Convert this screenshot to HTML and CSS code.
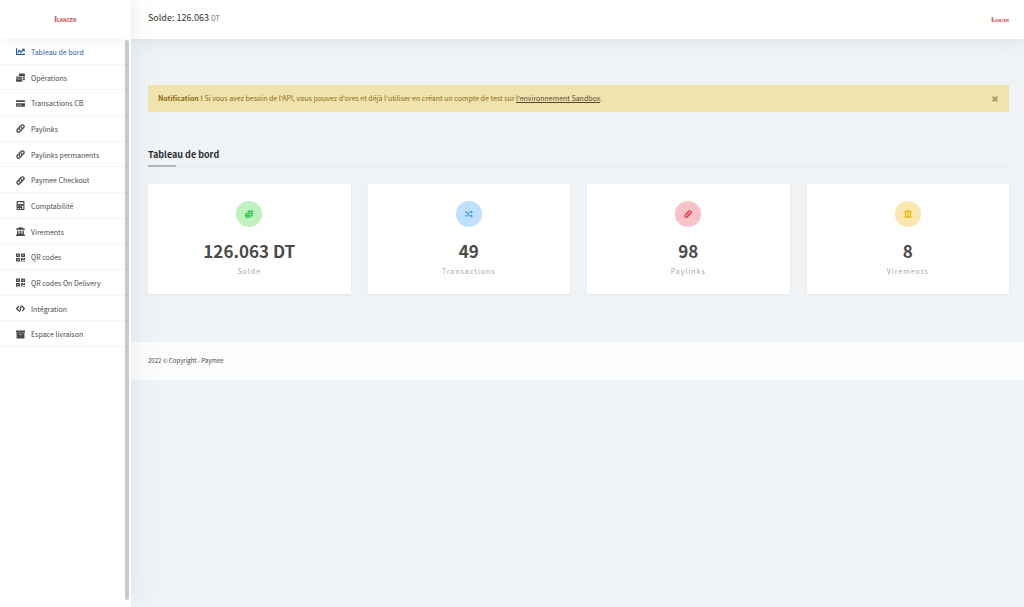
FILE: index.html
```html
<!DOCTYPE html>
<html lang="fr">
<head>
<meta charset="utf-8">
<meta name="viewport" content="width=device-width, initial-scale=1">
<title>Tableau de bord - Paymee</title>
<link rel="stylesheet" href="styles.css">
</head>
<body>
<svg class="sprite" aria-hidden="true">
  <symbol id="chart" viewBox="0 0 16 16"><path d="M0 2h2v10h14v2H0z"/><path d="M3 10V7.500l3-3 3 3 2.500-2.500L10 3.500V3h5.500v5.500H15L13 6.500 9 10.800l-3-3-2 2.200z"/></symbol>
  <symbol id="coins" viewBox="0 0 16 16"><path d="M6 .8h9l1 1v2.400l-1 1H6l-1-1V1.800zM12 6.200h4v2l-1 1h-3zM12 10.200h4v1.600l-1 1h-3z"/><path d="M1 6h9l1 1v1.500H0V7zM0 9.300h11v2.500H0zM0 12.600h11v1.900l-1 1H1l-1-1z"/></symbol>
  <symbol id="card" viewBox="0 0 18 16"><path d="M1.500 1.500h15c1 0 1.500.6 1.500 1.500v2H0V3c0-.9.5-1.500 1.500-1.500zM0 7.500h18v5.500c0 1-.5 1.500-1.500 1.500h-15C.5 14.500 0 14 0 13zm2 3.200v1.500h3v-1.500zm4.500 0v1.500H11v-1.500z" fill-rule="evenodd"/></symbol>
  <symbol id="link" viewBox="0 0 16 16"><g fill="none" stroke="currentColor" stroke-width="2.400" stroke-linecap="round"><path d="M6.500 9.800C5 8.300 5.100 6.700 6.400 5.400l2.800-2.900c1.300-1.300 3-1.300 4.200-.1s1.200 3 0 4.200l-1.600 1.600"/><path d="M9.500 6.200c1.500 1.500 1.400 3.100.1 4.400l-2.800 2.900c-1.300 1.300-3 1.300-4.200.1s-1.200-3 0-4.200l1.600-1.600"/></g></symbol>
  <symbol id="calc" viewBox="0 0 16 16"><path fill-rule="evenodd" d="M2.500 0h11C14.500 0 15 .5 15 1.500v13c0 1-.5 1.500-1.500 1.500h-11C1.500 16 1 15.500 1 14.500v-13C1 .5 1.500 0 2.500 0zM3 2v3.500h10V2zm0 6v1.500h2V8zm4 0v1.500h2V8zm4 0v6h2V8zM3 12.500V14h2v-1.500zm4 0V14h2v-1.500z"/></symbol>
  <symbol id="bank" viewBox="0 0 16 16"><path d="M8 0l8 3.200V5H0V3.200zM2 6h2.500v6h2V6h3v6h2V6H14v6l1 1v1H1v-1l1-1zM0 14.300h16V16H0z"/></symbol>
  <symbol id="qr" viewBox="0 0 16 16"><path fill-rule="evenodd" d="M0 1h7v6H0zm2.500 2v2h2V3zM9 1h7v6H9zm2.500 2v2h2V3zM0 9h7v6H0zm2.500 2v2h2v-2zM9 9h4v2h1V9h2v4h-4v-1h-1v3H9zM12 14h1.500v1.500H12zM14.500 14H16v1.500h-1.500z"/></symbol>
  <symbol id="code" viewBox="0 0 20 16"><path d="M5.500 3.500L1.500 8l4 4.500M14.500 3.500l4 4.500-4 4.500M11.700 1.500l-3.400 13" fill="none" stroke="currentColor" stroke-width="2.800" stroke-linecap="round"/></symbol>
  <symbol id="box" viewBox="0 0 16 16"><path fill-rule="evenodd" d="M0 1h16v3.500H0zM1 5h14v10H1zM5.500 7v1h5V7z"/></symbol>
  <symbol id="shuffle" viewBox="0 0 16 16"><path d="M0 4h3.200L9.500 12H13M0 12h3.200l2-2.500M7.500 6.500L9.500 4H13" fill="none" stroke="currentColor" stroke-width="2.300"/><path d="M12 .5L16 4l-4 3.500zM12 8.500l4 3.500-4 3.500z"/></symbol>
</svg>

<div class="app">
  <aside class="sidebar">
    <a class="brand" href="#"><span class="logo"><b>I</b>LANCER</span></a>
    <div class="nav-area">
      <nav class="nav">
        <a class="nav-link active" href="#"><svg class="icon"><use href="#chart"/></svg>Tableau de bord</a>
        <a class="nav-link" href="#"><svg class="icon"><use href="#coins"/></svg>Opérations</a>
        <a class="nav-link" href="#"><svg class="icon"><use href="#card"/></svg>Transactions CB</a>
        <a class="nav-link" href="#"><svg class="icon"><use href="#link"/></svg>Paylinks</a>
        <a class="nav-link" href="#"><svg class="icon"><use href="#link"/></svg>Paylinks permanents</a>
        <a class="nav-link" href="#"><svg class="icon"><use href="#link"/></svg>Paymee Checkout</a>
        <a class="nav-link" href="#"><svg class="icon"><use href="#calc"/></svg>Comptabilité</a>
        <a class="nav-link" href="#"><svg class="icon"><use href="#bank"/></svg>Virements</a>
        <a class="nav-link" href="#"><svg class="icon"><use href="#qr"/></svg>QR codes</a>
        <a class="nav-link" href="#"><svg class="icon"><use href="#qr"/></svg>QR codes On Delivery</a>
        <a class="nav-link" href="#"><svg class="icon"><use href="#code"/></svg>Intégration</a>
        <a class="nav-link" href="#"><svg class="icon"><use href="#box"/></svg>Espace livraison</a>
      </nav>
      <div class="scrollbar"></div>
    </div>
  </aside>

  <div class="page">
    <header class="topbar">
      <p class="balance">Solde: <span class="amount">126.063</span> <small class="currency">DT</small></p>
      <a class="avatar" href="#"><span class="logo small"><b>I</b>LANCER</span></a>
    </header>
    <main class="content">
      <div class="alert" role="alert">
        <p class="alert-text"><strong>Notification !</strong> Si vous avez besoin de l'API, vous pouvez d'ores et déjà l'utiliser en créant un compte de test sur <a class="alert-link" href="#">l'environnement Sandbox</a>.</p>
        <button class="close" type="button" aria-label="Fermer"><svg class="close-icon" viewBox="0 0 8 8"><path d="M1.700 1.700l4.600 4.600M6.300 1.700L1.700 6.300"/></svg></button>
      </div>
      <h1 class="title"><span class="title-text">Tableau de bord</span></h1>
      <section class="stats">
        <article class="stat">
          <span class="badge green"><svg class="icon"><use href="#coins"/></svg></span>
          <p class="value">126.063 DT</p><p class="label">Solde</p>
        </article>
        <article class="stat">
          <span class="badge blue"><svg class="icon"><use href="#shuffle"/></svg></span>
          <p class="value">49</p><p class="label">Transactions</p>
        </article>
        <article class="stat">
          <span class="badge red"><svg class="icon"><use href="#link"/></svg></span>
          <p class="value">98</p><p class="label">Paylinks</p>
        </article>
        <article class="stat">
          <span class="badge yellow"><svg class="icon"><use href="#bank"/></svg></span>
          <p class="value">8</p><p class="label">Virements</p>
        </article>
      </section>
    </main>
    <footer class="footer">2022 © Copyright - Paymee</footer>
  </div>
</div>
</body>
</html>
```
FILE: styles.css
```css
* { box-sizing: border-box; }
body {
  margin: 0;
  background: #eff3f6;
  color: #4a4a4a;
  font-family: "Noto Sans CJK SC", "Noto Sans", sans-serif;
  font-size: 7px;
  line-height: 12px;
}
p, h1 { margin: 0; }
a { color: inherit; text-decoration: none; }
.sprite { display: none; }
.icon { width: 9px; height: 9px; fill: currentColor; flex: none; }

.app { display: flex; min-height: 100vh; }

.sidebar {
  display: flex;
  flex-direction: column;
  flex: none;
  width: 131px;
  background: #fff;
  box-shadow: 0 0 26px rgba(90, 97, 105, 0.1);
  z-index: 1;
}
.brand {
  display: flex;
  align-items: center;
  justify-content: center;
  height: 39px;
  box-shadow: 0 2px 10px rgba(90, 97, 105, 0.08);
}
.logo { color: #cc3e48; font-size: 5px; font-weight: 700; line-height: 8px; }
.logo b { font-size: 7px; }
.logo.small { font-size: 4px; }
.logo.small b { font-size: 6px; }
.nav-area { display: flex; flex: 1; padding: 0 2px 7px 0; }
.nav { display: flex; flex-direction: column; flex: 1; height: 308px; }
.nav-link {
  display: flex;
  align-items: center;
  flex: 1;
  gap: 6px;
  padding: 1px 0 0 16px;
  border-bottom: 1px solid #f4f4f5;
}
.nav-link.active { color: #1f5cad; }
.scrollbar { width: 4px; margin-top: 1px; border-radius: 2px; background: #c8c9ca; }

.page { flex: 1; min-width: 0; }
.topbar {
  display: flex;
  align-items: center;
  justify-content: space-between;
  height: 39px;
  padding: 0 15px 0 17px;
  background: #fff;
  box-shadow: 0 2px 18px rgba(90, 97, 105, 0.12);
}
.balance { padding-bottom: 4px; font-size: 9px; color: #333; }
.currency { font-size: 7px; color: #777; }
.avatar { display: flex; }

.content { padding: 46px 15px 48px 17px; }
.alert {
  display: flex;
  align-items: center;
  justify-content: space-between;
  padding: 7px 10px;
  background: #f0e3ae;
  color: #8c6a0e;
  line-height: 13px;
}
.alert-link { color: #53482c; text-decoration: underline; }
.close { display: flex; padding: 0; border: 0; background: none; color: #a99b6c; }
.close-icon { width: 8px; height: 8px; fill: none; stroke: currentColor; stroke-width: 2; }

.title {
  margin: 35px 0 17px;
  border-bottom: 1px solid #e6eaee;
  color: #2b2c2e;
  font-size: 9px;
  font-weight: 700;
  line-height: 16px;
}
.title-text { display: block; padding-bottom: 2px; }
.title::after { content: ""; display: block; width: 28px; height: 2px; margin-bottom: -1px; background: #b5b6bb; }

.stats { display: grid; grid-template-columns: repeat(4, 1fr); gap: 17px; }
.stat {
  display: flex;
  flex-direction: column;
  align-items: center;
  padding: 17px 8px;
  background: #fff;
  box-shadow: 0 1px 2px rgba(90, 97, 105, 0.08);
}
.badge {
  display: flex;
  align-items: center;
  justify-content: center;
  width: 26px;
  height: 26px;
  border-radius: 50%;
}
.badge .icon { width: 8px; height: 8px; }
.green { background: #c1f0c0; color: #28c84a; }
.blue { background: #bfe0ff; color: #3a9be8; }
.red { background: #f7c3c8; color: #d63347; }
.yellow { background: #fde7b0; color: #eebc16; }
.value { margin-top: 11px; font-size: 17px; font-weight: 700; line-height: 26px; }
.label { margin-top: 1px; color: #a6a6a6; letter-spacing: 1px; }
.footer { padding: 13px 17px; background: #fbfcfe; font-size: 6px; }
```
